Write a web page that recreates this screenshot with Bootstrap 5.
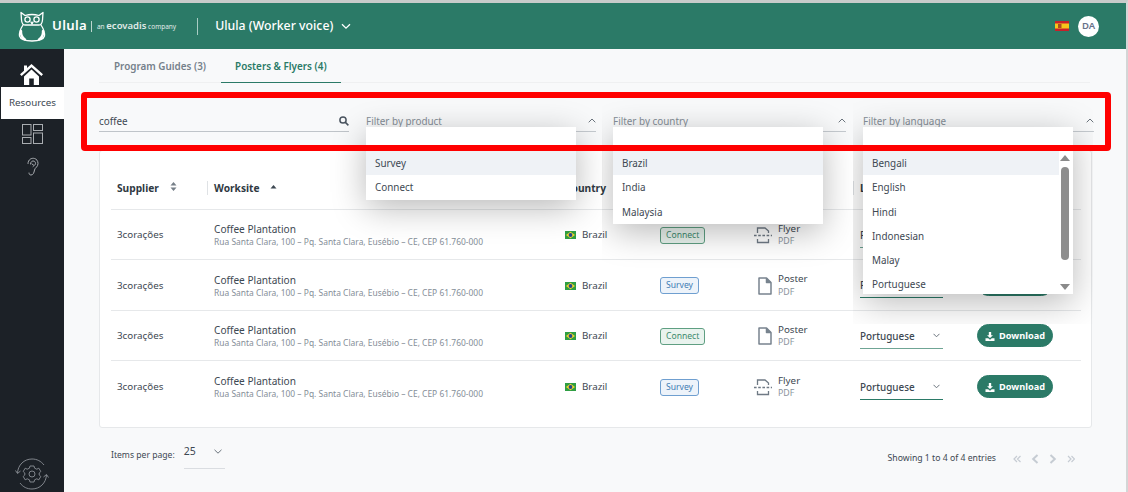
<!DOCTYPE html>
<html lang="en">
<head>
<meta charset="utf-8">
<title>Resources</title>
<link href="https://cdn.jsdelivr.net/npm/bootstrap@5.3.0/dist/css/bootstrap.min.css" rel="stylesheet">
<style>
html,body{height:100%;}
body{font-family:"Noto Sans",sans-serif;background:#f8f9fa;color:#3d4852;overflow:hidden;font-size:9.8px;}
.app-frame{height:492px;border-top:3px solid #c8cbca;border-right:2px solid #d4d6d6;}
.top-bar{height:46px;background:#2b7a67;color:#fff;padding-left:18px;padding-right:27px;}
.brand-name{font-size:13.2px;font-weight:600;letter-spacing:.3px;margin-left:6px;}
.brand-sep{width:1px;height:11px;background:#bcd6cf;margin:0 5px 0 4px;}
.brand-sub{font-size:6.5px;opacity:.85;white-space:nowrap;}
.brand-sub b{font-size:9.5px;font-weight:600;}
.bar-divider{width:1px;height:17px;background:#a9cdc4;margin:0 17px 0 21px;}
.program-name{font-size:12.3px;font-weight:500;}
.avatar-dot{width:21px;height:21px;border-radius:50%;background:#fff;color:#67728a;font-size:9.5px;font-weight:600;margin-left:9px;}
.side-rail{width:64px;background:#1c2127;}
.rail-active{background:#fff;color:#3d4852;font-size:9.8px;height:32px;margin-left:1px;}
.main-area{padding:0 34px 0 35px;min-width:0;}
.tab-strip{height:34px;border-bottom:1.5px solid #eff0f1;width:991px;}
.tab-link{font-size:9.9px;font-weight:600;color:#75808a;padding:0 15px;height:34px;line-height:34px;text-decoration:none;}
.tab-link.is-on{color:#2b7a67;border-bottom:1.5px solid #2b7a67;padding:0 14px;}
.filter-row{height:33px;margin-top:16px;width:995px;z-index:5;}
.filter-search{width:250px;flex:none;margin-right:17px;border-bottom:1px solid #bfc4c9;height:33px;padding-top:14.5px;font-size:9.9px;color:#3d4852;}
.filter-pick{flex:none;border-bottom:1px solid #c5cacf;height:33px;padding-top:14.5px;font-size:9.9px;color:#848d96;}
.pick-w1{width:230px;margin-right:17px;}
.pick-w2{width:233px;margin-right:17px;}
.pick-w3{width:231px;}
.pick-menu{position:absolute;top:28px;left:0;width:210px;background:#fff;box-shadow:0 8px 34px rgba(0,0,0,.28);z-index:6;color:#3d4852;font-size:9.9px;}
.menu-a{clip-path:inset(-28px -27px -70px -50px);}
.menu-b{clip-path:inset(-28px -30px -90px -11px);}
.menu-c{clip-path:inset(-28px -20px -30px -10px);}
.pick-blank{height:24px;}
.pick-row{height:24.3px;line-height:24px;padding-left:9px;}
.pick-row.is-hover{background:#eff2f6;}
.pick-list{height:143px;overflow:hidden;flex:1;}
.pick-scroll{width:14px;flex:none;height:143px;}
.scroll-up,.scroll-down{width:0;height:0;border-left:5px solid transparent;border-right:5px solid transparent;margin-left:1px;}
.scroll-up{border-bottom:6px solid #8a8a8a;margin-top:4px;}
.scroll-thumb{width:8px;height:93px;background:#8d8d8d;border-radius:4px;margin:6px 0 24px 2px;}
.scroll-down{border-top:6px solid #8a8a8a;}
.alert-frame{position:absolute;left:-18px;top:-7px;width:1030px;height:59px;border:6px solid #f00;border-radius:4px;z-index:7;pointer-events:none;}
.table-panel{width:993px;height:278px;margin-top:18px;background:#fff;border:1px solid #e6e8ea;border-radius:3px;padding:16px 11px;}
.res-table{table-layout:fixed;width:970px;margin:0;font-size:9.8px;color:#3d4852;}
.res-table th{height:42px;font-size:10.2px;font-weight:700;color:#2f3942;padding:2px 0 0 7px;vertical-align:middle;border-bottom:1px solid #e6e8ea;position:relative;background:transparent;}
.res-table td{height:50.6px;padding:2px 0 0 7px;vertical-align:middle;border-bottom:1px solid #e6e8ea;background:transparent;color:#3d4852;box-shadow:none;}
.res-table tr:last-child td{border-bottom:0;}
.res-table .first-col{padding-left:6px;}
.head-sep::before{content:"";position:absolute;left:0;top:14px;height:14px;width:1px;background:#dfe2e5;}
.sort-mark{display:inline-block;vertical-align:1px;margin-left:8px;}
.site-name{font-size:10.1px;line-height:14px;color:#3d4852;}
.site-addr{font-size:8.45px;line-height:12px;color:#858e98;white-space:nowrap;}
.flag-gap{gap:6px;}
.tag-box{display:inline-block;font-size:8.6px;line-height:15px;height:17px;padding:0 5px;border-radius:3px;border:1px solid;}
.tag-green{background:#e9f3ee;border-color:#5f9f82;color:#3e8a6d;}
.tag-blue{background:#edf3fa;border-color:#6f9fd0;color:#3f7cb4;}
.doc-label{line-height:13.5px;font-size:9.8px;margin-left:-2px;}
.doc-label span{display:block;font-size:8.8px;color:#8a939c;}
.lang-pick{width:83px;height:26px;padding-top:6px;margin-top:-1px;border-bottom:1.5px solid #2b7a67;font-size:9.9px;font-weight:500;color:#3d4852;}
.lang-pick.is-soft{border-bottom-color:#6fa595;}
.get-btn{--bs-btn-bg:#2b7a67;--bs-btn-color:#fff;--bs-btn-border-color:#2b7a67;--bs-btn-hover-bg:#2b7a67;--bs-btn-hover-color:#fff;--bs-btn-padding-y:0;--bs-btn-padding-x:6px;--bs-btn-font-size:9.2px;--bs-btn-font-weight:700;--bs-btn-border-radius:12px;height:23px;width:76px;line-height:21px;white-space:nowrap;margin-top:-2px;}
.pager-row{width:993px;margin-top:14px;padding-left:12px;padding-right:17px;}
.per-label{font-size:8.6px;color:#3d4852;}
.per-pick{width:41px;height:27px;margin-left:9px;border-bottom:1.5px solid #dadde1;font-size:10.5px;color:#3d4852;padding-bottom:7px;}
.entries-text{font-size:8.7px;color:#3d4852;margin-right:17px;}
.pager-arrows{color:#c6ccd3;}
.pager-zone{margin-top:10px;}
.pager-gap{gap:10px;}
.rail-cog{margin-top:auto;margin-bottom:1px;}
</style>
</head>
<body>
<div class="app-frame d-flex flex-column">
  <header class="top-bar d-flex align-items-center">
    <svg width="28" height="31" viewBox="0 0 28 31" fill="none" stroke="#fff" stroke-width="1.3" stroke-linecap="round" stroke-linejoin="round">
      <path d="M3 1.5 L7 4.5 Q14 2.5 21 4.5 L25 1.5 L24.5 9 Q24 14 21 14 L7 14 Q4 14 3.5 9 Z"/>
      <circle cx="9.5" cy="8.5" r="2.6"/><circle cx="18.5" cy="8.5" r="2.6"/>
      <path d="M13 11 L14 13 L15 11"/>
      <path d="M5 14 Q1 20 1.5 25 Q3 30 14 30 Q25 30 26.5 25 Q27 20 23 14"/>
      <path d="M3 20 Q2.5 26 7 28.5 M25 20 Q25.5 26 21 28.5" stroke-width="2.4"/>
    </svg>
    <span class="brand-name">Ulula</span>
    <span class="brand-sep"></span>
    <span class="brand-sub">an <b>ecovadis</b> company</span>
    <span class="bar-divider"></span>
    <span class="program-name">Ulula (Worker voice)</span>
    <svg class="ms-2" width="10" height="7" viewBox="0 0 10 7" fill="none" stroke="#fff" stroke-width="1.3"><path d="M1 1.2 L5 5.2 L9 1.2"/></svg>
    <svg class="ms-auto" width="14" height="10" viewBox="0 0 14 10"><rect width="14" height="10" fill="#c8202a"/><rect y="2.5" width="14" height="5" fill="#f6c51a"/><rect x="3" y="3" width="3.5" height="4" fill="#a8501f"/></svg>
    <span class="avatar-dot d-flex align-items-center justify-content-center">DA</span>
  </header>
  <div class="d-flex flex-grow-1" style="min-height:0">
    <aside class="side-rail d-flex flex-column flex-shrink-0">
      <div class="d-flex justify-content-center" style="padding:15px 2px 0 0;height:38px">
        <svg width="23" height="21" viewBox="0 0 23 21" fill="#fff"><path d="M11.5 0 L23 10.3 L21.4 12 L11.5 3.2 L1.6 12 L0 10.3 L4 6.7 L4 1.5 L7 1.5 L7 4 Z"/><path d="M4 12.4 L11.5 5.6 L19 12.4 L19 21 L13.8 21 L13.8 14.5 L9.2 14.5 L9.2 21 L4 21 Z"/></svg>
      </div>
      <div class="rail-active d-flex align-items-center justify-content-center">Resources</div>
      <div class="d-flex justify-content-center" style="padding-top:5px">
        <svg width="21" height="20" viewBox="0 0 21 20" fill="none" stroke="#a9adb1" stroke-width="1"><rect x=".5" y=".5" width="8.5" height="10.5"/><rect x="11.5" y=".5" width="9" height="6"/><rect x=".5" y="13.5" width="8.5" height="6"/><rect x="11.5" y="9" width="9" height="10.5"/></svg>
      </div>
      <div class="d-flex justify-content-center" style="padding-top:13px">
        <svg width="13" height="19" viewBox="0 0 13 19" fill="none" stroke="#a9adb1" stroke-width="1" stroke-linecap="round"><path d="M2 6.5 C2 -0.5 12 -0.5 12 6.5 C12 10 9 10.5 8.5 13 C8 16 7 18 5 18 C3.5 18 3 17 3 16"/><path d="M4.5 7 C4.5 3 9.5 3 9.5 6.5 C9.5 8 8 8.5 7 9.5 M6 7 L7.5 8"/></svg>
      </div>
      <div class="rail-cog d-flex justify-content-center">
        <svg width="34" height="34" viewBox="0 0 34 34" fill="none" stroke="#8b9096" stroke-width=".9"><path d="M2.5 16 C3 8 9 2 17 2 C22 2 26 4.2 29 8"/><path d="M31.5 18 C31 26 25 32 17 32 C12 32 8 30 5 26"/><path d="M0.5 13.5 L2.5 16.5 L5.5 14"/><path d="M33.5 20.5 L31.5 17.5 L28.5 20"/><path d="M15 9 L19 9 L19.6 11.2 L21.8 12.2 L23.8 11.2 L25.8 14.5 L24.2 16 L24.2 18 L25.8 19.5 L23.8 22.8 L21.8 21.8 L19.6 22.8 L19 25 L15 25 L14.4 22.8 L12.2 21.8 L10.2 22.8 L8.2 19.5 L9.8 18 L9.8 16 L8.2 14.5 L10.2 11.2 L12.2 12.2 L14.4 11.2 Z"/><circle cx="17" cy="17" r="3"/></svg>
      </div>
    </aside>
    <main class="main-area flex-grow-1">
      <nav class="tab-strip d-flex">
        <a class="tab-link" href="#">Program Guides (3)</a>
        <a class="tab-link is-on" href="#">Posters &amp; Flyers (4)</a>
      </nav>
      <div class="filter-row d-flex position-relative">
        <div class="alert-frame"></div>
        <div class="filter-search d-flex justify-content-between align-items-start">
          <span>coffee</span>
          <svg width="10" height="10" viewBox="0 0 10 10" fill="none" stroke="#4b5560" stroke-width="1.5" style="margin-top:2px"><circle cx="4" cy="4" r="3.1"/><path d="M6.4 6.4 L9.4 9.4"/></svg>
        </div>
        <div class="filter-pick pick-w1 position-relative d-flex justify-content-between align-items-start">
          <span>Filter by product</span>
          <svg width="8" height="5" viewBox="0 0 8 5" fill="none" stroke="#6b747d" stroke-width="1" style="margin:4px 0 0"><path d="M.7 4.3 L4 1 L7.3 4.3"/></svg>
          <div class="pick-menu menu-a">
            <div class="pick-blank"></div>
            <div class="pick-row is-hover">Survey</div>
            <div class="pick-row">Connect</div>
          </div>
        </div>
        <div class="filter-pick pick-w2 position-relative d-flex justify-content-between align-items-start">
          <span>Filter by country</span>
          <svg width="8" height="5" viewBox="0 0 8 5" fill="none" stroke="#6b747d" stroke-width="1" style="margin:4px 0 0"><path d="M.7 4.3 L4 1 L7.3 4.3"/></svg>
          <div class="pick-menu menu-b">
            <div class="pick-blank"></div>
            <div class="pick-row is-hover">Brazil</div>
            <div class="pick-row">India</div>
            <div class="pick-row">Malaysia</div>
          </div>
        </div>
        <div class="filter-pick pick-w3 position-relative d-flex justify-content-between align-items-start">
          <span>Filter by language</span>
          <svg width="8" height="5" viewBox="0 0 8 5" fill="none" stroke="#6b747d" stroke-width="1" style="margin:4px 0 0"><path d="M.7 4.3 L4 1 L7.3 4.3"/></svg>
          <div class="pick-menu menu-c">
            <div class="pick-blank"></div>
            <div class="d-flex">
              <div class="pick-list">
                <div class="pick-row is-hover">Bengali</div>
                <div class="pick-row">English</div>
                <div class="pick-row">Hindi</div>
                <div class="pick-row">Indonesian</div>
                <div class="pick-row">Malay</div>
                <div class="pick-row">Portuguese</div>
              </div>
              <div class="pick-scroll">
                <div class="scroll-up"></div>
                <div class="scroll-thumb"></div>
                <div class="scroll-down"></div>
              </div>
            </div>
          </div>
        </div>
      </div>
      <section class="table-panel">
        <table class="table res-table">
          <colgroup><col style="width:96px"><col style="width:351px"><col style="width:95px"><col style="width:94px"><col style="width:106px"><col style="width:117px"><col style="width:111px"></colgroup>
          <thead>
            <tr>
              <th class="first-col">Supplier <svg class="sort-mark" style="margin-left:9px" width="7" height="9" viewBox="0 0 7 9" fill="#767f88"><path d="M3.5 0 L6.5 3.4 L.5 3.4 Z M3.5 9 L6.5 5.6 L.5 5.6 Z"/></svg></th>
              <th class="head-sep">Worksite <svg class="sort-mark" width="7" height="4" viewBox="0 0 7 4" fill="#3d4852" style="vertical-align:3px"><path d="M3.5 0 L6.5 3.4 L.5 3.4 Z"/></svg></th>
              <th>Country</th>
              <th>Product</th>
              <th>Type</th>
              <th class="head-sep">Language</th>
              <th class="head-sep">Action</th>
            </tr>
          </thead>
          <tbody>
            <tr>
              <td class="first-col">3corações</td>
              <td><div class="site-name">Coffee Plantation</div><div class="site-addr">Rua Santa Clara, 100 – Pq. Santa Clara, Eusébio – CE, CEP 61.760-000</div></td>
              <td><div class="d-flex align-items-center flag-gap"><svg width="11" height="8" viewBox="0 0 11 8"><rect width="11" height="8" fill="#2f9e44"/><path d="M5.5 .7 L10 4 L5.5 7.3 L1 4 Z" fill="#f4d32c"/><circle cx="5.5" cy="4" r="1.9" fill="#26478f"/></svg>Brazil</div></td>
              <td><span class="tag-box tag-green">Connect</span></td>
              <td><div class="d-flex align-items-center gap-2"><svg width="18" height="17" viewBox="0 0 18 17" fill="none" stroke="#6f7a85" stroke-width="1.3"><path d="M3.5 6 L3.5 1 L11 1 L14.5 4 L14.5 6"/><path d="M0 8.5 H18" stroke-dasharray="2.6 1.6"/><path d="M3.5 12 L3.5 15.5 L14.5 15.5 L14.5 12"/></svg><div class="doc-label">Flyer<span>PDF</span></div></div></td>
              <td><div class="lang-pick is-soft d-flex justify-content-between"><span>Portuguese</span></div></td>
              <td><button class="btn get-btn" type="button"><svg class="me-1" width="10" height="9" viewBox="0 0 10 10" fill="#fff"><path d="M3.7 0 H6.3 V3.6 H8.3 L5 6.8 L1.7 3.6 H3.7 Z"/><path d="M0 7 H3 L5 8.6 L7 7 H10 V10 H0 Z"/></svg>Download</button></td>
            </tr>
            <tr>
              <td class="first-col">3corações</td>
              <td><div class="site-name">Coffee Plantation</div><div class="site-addr">Rua Santa Clara, 100 – Pq. Santa Clara, Eusébio – CE, CEP 61.760-000</div></td>
              <td><div class="d-flex align-items-center flag-gap"><svg width="11" height="8" viewBox="0 0 11 8"><rect width="11" height="8" fill="#2f9e44"/><path d="M5.5 .7 L10 4 L5.5 7.3 L1 4 Z" fill="#f4d32c"/><circle cx="5.5" cy="4" r="1.9" fill="#26478f"/></svg>Brazil</div></td>
              <td><span class="tag-box tag-blue">Survey</span></td>
              <td><div class="d-flex align-items-center gap-2"><svg class="ms-1" width="14" height="18" viewBox="0 0 14 18" fill="none" stroke="#78838e" stroke-width="1.5" stroke-linejoin="round"><path d="M1 1 L8.5 1 L13 5.5 L13 17 L1 17 Z"/><path d="M8.5 1 L8.5 5.5 L13 5.5" fill="#78838e"/></svg><div class="doc-label">Poster<span>PDF</span></div></div></td>
              <td><div class="lang-pick d-flex justify-content-between"><span>Portuguese</span></div></td>
              <td><button class="btn get-btn" type="button"><svg class="me-1" width="10" height="9" viewBox="0 0 10 10" fill="#fff"><path d="M3.7 0 H6.3 V3.6 H8.3 L5 6.8 L1.7 3.6 H3.7 Z"/><path d="M0 7 H3 L5 8.6 L7 7 H10 V10 H0 Z"/></svg>Download</button></td>
            </tr>
            <tr>
              <td class="first-col">3corações</td>
              <td><div class="site-name">Coffee Plantation</div><div class="site-addr">Rua Santa Clara, 100 – Pq. Santa Clara, Eusébio – CE, CEP 61.760-000</div></td>
              <td><div class="d-flex align-items-center flag-gap"><svg width="11" height="8" viewBox="0 0 11 8"><rect width="11" height="8" fill="#2f9e44"/><path d="M5.5 .7 L10 4 L5.5 7.3 L1 4 Z" fill="#f4d32c"/><circle cx="5.5" cy="4" r="1.9" fill="#26478f"/></svg>Brazil</div></td>
              <td><span class="tag-box tag-green">Connect</span></td>
              <td><div class="d-flex align-items-center gap-2"><svg class="ms-1" width="14" height="18" viewBox="0 0 14 18" fill="none" stroke="#78838e" stroke-width="1.5" stroke-linejoin="round"><path d="M1 1 L8.5 1 L13 5.5 L13 17 L1 17 Z"/><path d="M8.5 1 L8.5 5.5 L13 5.5" fill="#78838e"/></svg><div class="doc-label">Poster<span>PDF</span></div></div></td>
              <td><div class="lang-pick is-soft d-flex justify-content-between"><span>Portuguese</span><svg width="7" height="5" viewBox="0 0 7 5" fill="none" stroke="#6b747d" stroke-width="1" style="margin:4px 3px 0 0"><path d="M.5 .8 L3.5 3.8 L6.5 .8"/></svg></div></td>
              <td><button class="btn get-btn" type="button"><svg class="me-1" width="10" height="9" viewBox="0 0 10 10" fill="#fff"><path d="M3.7 0 H6.3 V3.6 H8.3 L5 6.8 L1.7 3.6 H3.7 Z"/><path d="M0 7 H3 L5 8.6 L7 7 H10 V10 H0 Z"/></svg>Download</button></td>
            </tr>
            <tr>
              <td class="first-col">3corações</td>
              <td><div class="site-name">Coffee Plantation</div><div class="site-addr">Rua Santa Clara, 100 – Pq. Santa Clara, Eusébio – CE, CEP 61.760-000</div></td>
              <td><div class="d-flex align-items-center flag-gap"><svg width="11" height="8" viewBox="0 0 11 8"><rect width="11" height="8" fill="#2f9e44"/><path d="M5.5 .7 L10 4 L5.5 7.3 L1 4 Z" fill="#f4d32c"/><circle cx="5.5" cy="4" r="1.9" fill="#26478f"/></svg>Brazil</div></td>
              <td><span class="tag-box tag-blue">Survey</span></td>
              <td><div class="d-flex align-items-center gap-2"><svg width="18" height="17" viewBox="0 0 18 17" fill="none" stroke="#6f7a85" stroke-width="1.3"><path d="M3.5 6 L3.5 1 L11 1 L14.5 4 L14.5 6"/><path d="M0 8.5 H18" stroke-dasharray="2.6 1.6"/><path d="M3.5 12 L3.5 15.5 L14.5 15.5 L14.5 12"/></svg><div class="doc-label">Flyer<span>PDF</span></div></div></td>
              <td><div class="lang-pick d-flex justify-content-between"><span>Portuguese</span><svg width="7" height="5" viewBox="0 0 7 5" fill="none" stroke="#6b747d" stroke-width="1" style="margin:4px 3px 0 0"><path d="M.5 .8 L3.5 3.8 L6.5 .8"/></svg></div></td>
              <td><button class="btn get-btn" type="button"><svg class="me-1" width="10" height="9" viewBox="0 0 10 10" fill="#fff"><path d="M3.7 0 H6.3 V3.6 H8.3 L5 6.8 L1.7 3.6 H3.7 Z"/><path d="M0 7 H3 L5 8.6 L7 7 H10 V10 H0 Z"/></svg>Download</button></td>
            </tr>
          </tbody>
        </table>
      </section>
      <div class="pager-row d-flex justify-content-between align-items-start">
        <div class="d-flex align-items-center">
          <span class="per-label">Items per page:</span>
          <div class="per-pick d-flex justify-content-between align-items-center"><span>25</span><svg width="8" height="5" viewBox="0 0 8 5" fill="none" stroke="#6b747d" stroke-width="1" style="margin-right:3px"><path d="M.5 .8 L4 4.2 L7.5 .8"/></svg></div>
        </div>
        <div class="pager-zone d-flex align-items-center">
          <span class="entries-text">Showing 1 to 4 of 4 entries</span>
          <div class="pager-arrows pager-gap d-flex align-items-center">
            <svg width="8" height="8" viewBox="0 0 8 8" fill="none" stroke="currentColor" stroke-width="1.2"><path d="M4 1 L1 4 L4 7 M7.5 1 L4.5 4 L7.5 7"/></svg>
            <svg width="8" height="10" viewBox="0 0 8 10" fill="none" stroke="currentColor" stroke-width="2"><path d="M6.5 1 L2.2 5 L6.5 9"/></svg>
            <svg width="8" height="10" viewBox="0 0 8 10" fill="none" stroke="currentColor" stroke-width="2"><path d="M1.5 1 L5.8 5 L1.5 9"/></svg>
            <svg width="8" height="8" viewBox="0 0 8 8" fill="none" stroke="currentColor" stroke-width="1.2"><path d="M1 1 L4 4 L1 7 M4.5 1 L7.5 4 L4.5 7"/></svg>
          </div>
        </div>
      </div>
    </main>
  </div>
</div>
<script src="https://cdn.jsdelivr.net/npm/bootstrap@5.3.0/dist/js/bootstrap.bundle.min.js"></script>
</body>
</html>
